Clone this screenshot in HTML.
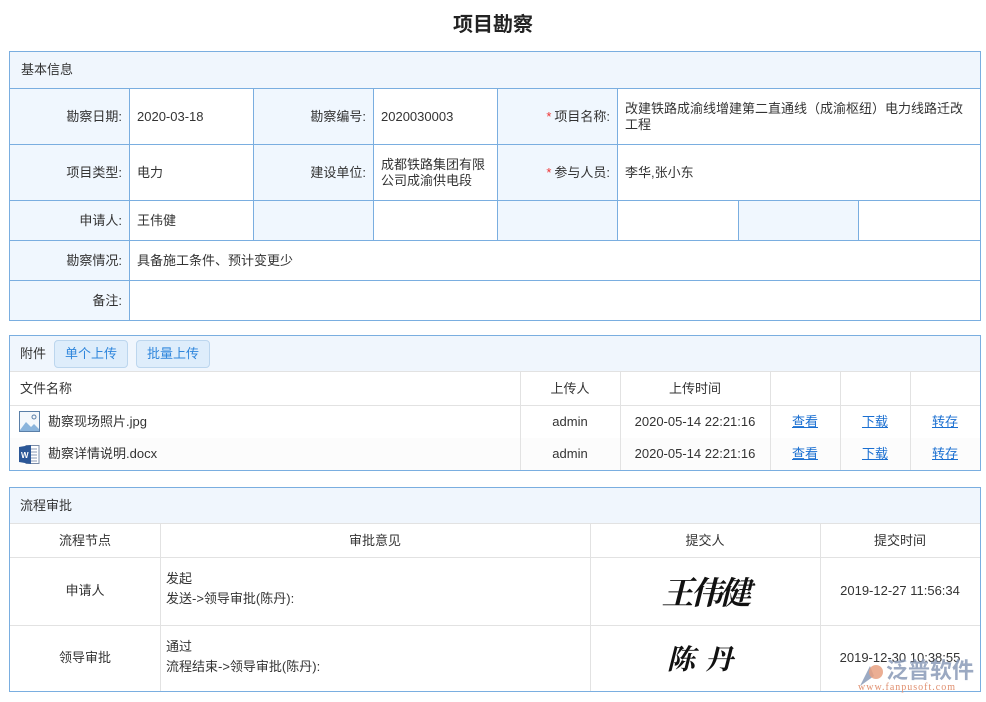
<!DOCTYPE html>
<html><head><meta charset="utf-8"><style>
*{margin:0;padding:0;box-sizing:border-box}
body{width:986px;height:702px;background:#fff;position:relative;font-family:"Liberation Sans","Noto Sans CJK SC",sans-serif;font-size:13px;color:#333;overflow:hidden}
.a{position:absolute}
.c{position:absolute;border:1px solid #7aaee0;display:flex;align-items:center;padding:0 7px;line-height:16px}
.l{background:#f0f7fe;justify-content:flex-end}
.w{background:#fff}
.g{position:absolute;display:flex;align-items:center;padding:0 10px;border-right:1px solid #e2e2e2;border-bottom:1px solid #e2e2e2;line-height:20px}
.ctr{justify-content:center}
.lk{color:#1a6fd1;text-decoration:underline}
.st{color:#e33;margin-right:3px}
.sig{font-family:'Noto Serif CJK SC',serif;font-weight:bold;font-style:italic;color:#111}
</style></head><body>
<div class="a" style="left:0;top:8px;width:986px;text-align:center;font-size:20px;font-weight:bold;color:#222">项目勘察</div>

<!-- panel 1 -->
<div class="c" style="left:9px;top:51px;width:972px;height:38px;background:#f0f6fd;padding-left:11px">基本信息</div>
<div class="c l" style="left:9px;top:88px;width:121px;height:57px">勘察日期:</div>
<div class="c w" style="left:129px;top:88px;width:125px;height:57px">2020-03-18</div>
<div class="c l" style="left:253px;top:88px;width:121px;height:57px">勘察编号:</div>
<div class="c w" style="left:373px;top:88px;width:125px;height:57px">2020030003</div>
<div class="c l" style="left:497px;top:88px;width:121px;height:57px"><span class="st">*</span>项目名称:</div>
<div class="c w" style="left:617px;top:88px;width:364px;height:57px">改建铁路成渝线增建第二直通线（成渝枢纽）电力线路迁改工程</div>
<div class="c l" style="left:9px;top:144px;width:121px;height:57px">项目类型:</div>
<div class="c w" style="left:129px;top:144px;width:125px;height:57px">电力</div>
<div class="c l" style="left:253px;top:144px;width:121px;height:57px">建设单位:</div>
<div class="c w" style="left:373px;top:144px;width:125px;height:57px">成都铁路集团有限公司成渝供电段</div>
<div class="c l" style="left:497px;top:144px;width:121px;height:57px"><span class="st">*</span>参与人员:</div>
<div class="c w" style="left:617px;top:144px;width:364px;height:57px">李华,张小东</div>
<div class="c l" style="left:9px;top:200px;width:121px;height:41px">申请人:</div>
<div class="c w" style="left:129px;top:200px;width:125px;height:41px">王伟健</div>
<div class="c l" style="left:253px;top:200px;width:121px;height:41px"></div>
<div class="c w" style="left:373px;top:200px;width:125px;height:41px"></div>
<div class="c l" style="left:497px;top:200px;width:121px;height:41px"></div>
<div class="c w" style="left:617px;top:200px;width:122px;height:41px"></div>
<div class="c l" style="left:738px;top:200px;width:121px;height:41px"></div>
<div class="c w" style="left:858px;top:200px;width:123px;height:41px"></div>
<div class="c l" style="left:9px;top:240px;width:121px;height:41px">勘察情况:</div>
<div class="c w" style="left:129px;top:240px;width:852px;height:41px">具备施工条件、预计变更少</div>
<div class="c l" style="left:9px;top:280px;width:121px;height:41px">备注:</div>
<div class="c w" style="left:129px;top:280px;width:852px;height:41px"></div>

<!-- panel 2 -->
<div class="a" style="left:9px;top:335px;width:972px;height:136px;border:1px solid #7aaee0"></div>
<div class="a" style="left:10px;top:336px;width:970px;height:36px;background:#f0f6fd;border-bottom:1px solid #e2e2e2"></div>
<div class="a" style="left:20px;top:345px;line-height:18px">附件</div>
<div class="a" style="left:54px;top:340px;width:74px;height:28px;border:1px solid #bcd6ee;border-radius:4px;background:#deedfb;color:#2f86dc;text-align:center;line-height:26px">单个上传</div>
<div class="a" style="left:136px;top:340px;width:74px;height:28px;border:1px solid #bcd6ee;border-radius:4px;background:#deedfb;color:#2f86dc;text-align:center;line-height:26px">批量上传</div>
<div class="g" style="left:10px;top:372px;width:511px;height:34px">文件名称</div>
<div class="g ctr" style="left:520px;top:372px;width:101px;height:34px">上传人</div>
<div class="g ctr" style="left:620px;top:372px;width:151px;height:34px">上传时间</div>
<div class="g" style="left:770px;top:372px;width:71px;height:34px"></div>
<div class="g" style="left:840px;top:372px;width:71px;height:34px"></div>
<div class="g" style="left:910px;top:372px;width:70px;height:34px;border-right:none"></div>
<div class="g" style="left:10px;top:405px;width:511px;height:34px;padding-left:9px">
<svg width="21" height="21" viewBox="0 0 21 21" style="margin-right:8px"><rect x="0.5" y="0.5" width="20" height="20" fill="#f4f8fc" stroke="#5a7fa8"/><path d="M1 19 L7 11 L12 16 L15 13 L20 18 L20 20 L1 20Z" fill="#8ab4dc"/><circle cx="15" cy="6" r="2" fill="none" stroke="#5a7fa8"/></svg>勘察现场照片.jpg</div>
<div class="g ctr" style="left:520px;top:405px;width:101px;height:34px">admin</div>
<div class="g ctr" style="left:620px;top:405px;width:151px;height:34px">2020-05-14 22:21:16</div>
<div class="g ctr" style="left:770px;top:405px;width:71px;height:34px"><span class="lk">查看</span></div>
<div class="g ctr" style="left:840px;top:405px;width:71px;height:34px"><span class="lk">下载</span></div>
<div class="g ctr" style="left:910px;top:405px;width:70px;height:34px;border-right:none"><span class="lk">转存</span></div>
<div class="a" style="left:10px;top:438px;width:970px;height:32px;background:#fcfcfc"></div>
<div class="g" style="left:10px;top:438px;width:511px;height:32px;padding-left:9px;border-bottom:none">
<svg width="21" height="21" viewBox="0 0 21 21" style="margin-right:8px"><rect x="7" y="1.5" width="13" height="18" fill="#fff" stroke="#7a8ca8"/><path d="M10 5h8M10 8h8M10 11h8M10 14h8M10 17h8" stroke="#8a9ab5"/><path d="M0 3 L12 1 L12 20 L0 18Z" fill="#2b5797"/><text x="2" y="14" font-size="8" fill="#fff" font-weight="bold" font-family="Liberation Sans">W</text></svg>勘察详情说明.docx</div>
<div class="g ctr" style="left:520px;top:438px;width:101px;height:32px;border-bottom:none">admin</div>
<div class="g ctr" style="left:620px;top:438px;width:151px;height:32px;border-bottom:none">2020-05-14 22:21:16</div>
<div class="g ctr" style="left:770px;top:438px;width:71px;height:32px;border-bottom:none"><span class="lk">查看</span></div>
<div class="g ctr" style="left:840px;top:438px;width:71px;height:32px;border-bottom:none"><span class="lk">下载</span></div>
<div class="g ctr" style="left:910px;top:438px;width:70px;height:32px;border:none"><span class="lk">转存</span></div>

<!-- panel 3 -->
<div class="a" style="left:9px;top:487px;width:972px;height:205px;border:1px solid #7aaee0"></div>
<div class="a" style="left:10px;top:488px;width:970px;height:36px;background:#f0f6fd;border-bottom:1px solid #e2e2e2;padding-left:10px;line-height:35px">流程审批</div>
<div class="g ctr" style="left:10px;top:524px;width:151px;height:34px">流程节点</div>
<div class="g ctr" style="left:160px;top:524px;width:431px;height:34px">审批意见</div>
<div class="g ctr" style="left:590px;top:524px;width:231px;height:34px">提交人</div>
<div class="g ctr" style="left:820px;top:524px;width:160px;height:34px;border-right:none">提交时间</div>
<div class="g ctr" style="left:10px;top:557px;width:151px;height:69px">申请人</div>
<div class="g" style="left:160px;top:557px;width:431px;height:69px;padding-left:6px;display:block;padding-top:12px;line-height:20px">发起<br>发送->领导审批(陈丹):</div>
<div class="g ctr sig" style="left:590px;top:557px;width:231px;height:69px;font-size:32px;letter-spacing:-3px">王伟健</div>
<div class="g ctr" style="left:820px;top:557px;width:160px;height:69px;border-right:none">2019-12-27 11:56:34</div>
<div class="g ctr" style="left:10px;top:625px;width:151px;height:66px;border-bottom:none">领导审批</div>
<div class="g" style="left:160px;top:625px;width:431px;height:66px;padding-left:6px;display:block;padding-top:12px;line-height:20px;border-bottom:none">通过<br>流程结束->领导审批(陈丹):</div>
<div class="g ctr sig" style="left:590px;top:625px;width:231px;height:66px;border-bottom:none;font-size:28px;letter-spacing:10px">陈丹</div>
<div class="g ctr" style="left:820px;top:625px;width:160px;height:66px;border:none">2019-12-30 10:38:55</div>

<!-- watermark -->
<svg class="a" style="left:858px;top:662px" width="28" height="26" viewBox="0 0 28 26"><path d="M2 24 L12 4 L16 14Z" fill="#8a9bb8" opacity=".85"/><circle cx="18" cy="10" r="7" fill="#e8a080" opacity=".85"/></svg>
<div class="a" style="left:886px;top:658px;font-size:22px;font-weight:bold;color:#8a9bb8;opacity:.85;letter-spacing:0px;line-height:26px">泛普软件</div>
<div class="a" style="left:858px;top:682px;font-size:10px;color:#e09070;font-family:'Liberation Serif',serif;letter-spacing:1px;line-height:12px">www.fanpusoft.com</div>
</body></html>
